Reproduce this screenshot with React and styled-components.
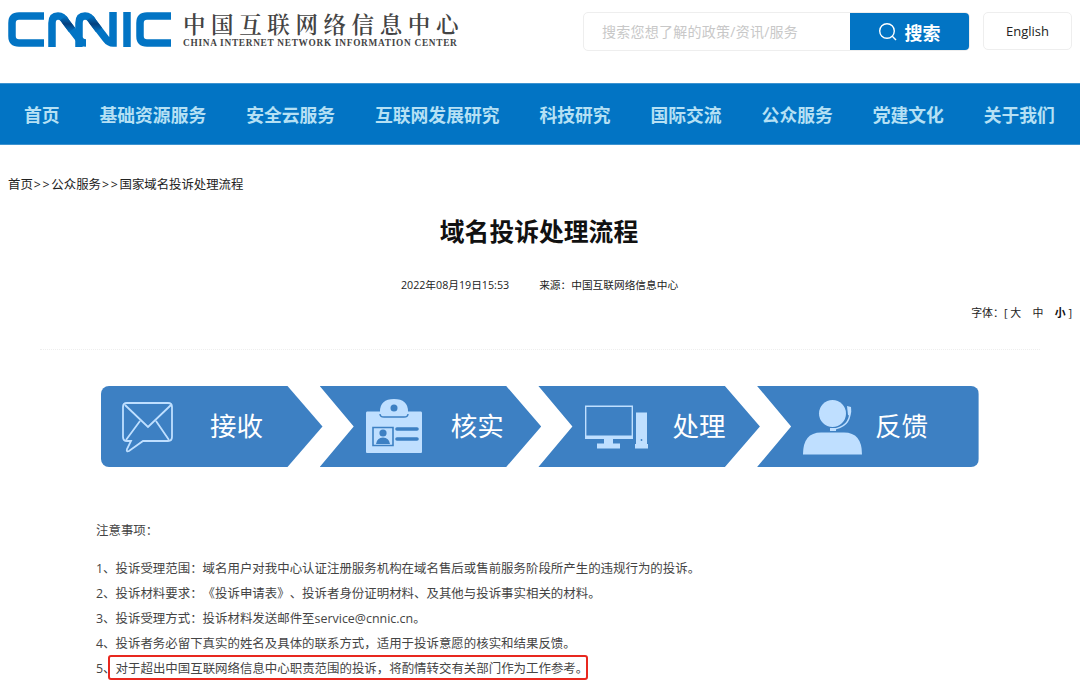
import React from 'react';
import styled, {createGlobalStyle} from 'styled-components';

const GlobalStyle = createGlobalStyle`
  html, body {
    margin: 0;
    padding: 0;
    background: #fff;
  }
  body {
    font-family: "Open Sans", "Noto Sans CJK SC", sans-serif;
    color: #333;
    overflow: hidden;
    text-spacing-trim: space-all;
  }
`;

const Page = styled.div`
  width: 1080px;
  height: 680px;
  overflow: hidden;
`;

const Header = styled.header`
  height: 83px;
  display: flex;
  align-items: flex-start;
  justify-content: space-between;
  padding: 12px 8px 0;
  box-sizing: border-box;
`;

const Brand = styled.div`
  display: flex;
  gap: 12px;
`;

const BrandText = styled.div`
  display: flex;
  flex-direction: column;
  font-family: "Liberation Serif", "Noto Sans CJK SC", serif;
  color: #444;
`;

const BrandCn = styled.div`
  font-family: "Noto Serif CJK SC", "Noto Sans CJK SC", serif;
  font-size: 22.5px;
  font-weight: 600;
  line-height: 23px;
  letter-spacing: 5.6px;
  white-space: nowrap;
`;

const BrandEn = styled.div`
  margin-top: 3px;
  font-size: 9.3px;
  font-weight: bold;
  line-height: 11px;
  letter-spacing: 0.72px;
  white-space: nowrap;
`;

const HeaderRight = styled.div`
  display: flex;
  gap: 13px;
`;

const SearchBox = styled.div`
  width: 387px;
  height: 39px;
  display: flex;
  border: 1px solid #eee;
  border-radius: 5px;
  box-sizing: border-box;
  overflow: hidden;
`;

const SearchInput = styled.div`
  flex: 1;
  padding-left: 18px;
  font-size: 14px;
  line-height: 37px;
  letter-spacing: 0.25px;
  color: #c8c8c8;
  white-space: nowrap;
`;

const SearchButton = styled.div`
  width: 119px;
  display: flex;
  align-items: center;
  justify-content: center;
  gap: 7px;
  padding-right: 1px;
  box-sizing: border-box;
  background: #0274c4;
  color: #fff;
  font-size: 18px;
  font-weight: bold;
`;

const LangButton = styled.div`
  width: 89px;
  height: 38px;
  border: 1px solid #eee;
  border-radius: 5px;
  box-sizing: border-box;
  font-size: 13px;
  line-height: 36px;
  text-align: center;
  color: #222;
`;

const Nav = styled.nav`
  height: 62px;
  display: flex;
  align-items: center;
  justify-content: space-between;
  padding: 0 25px 0 24px;
  box-sizing: border-box;
  background: #0274c4;
  border-top: 1px solid #3d93d0;
  border-bottom: 1px solid #3d93d0;
  color: #b5e0f4;
  font-size: 17.8px;
  font-weight: bold;
`;

const Crumbs = styled.div`
  padding: 32px 8px 0;
  font-size: 12.4px;
  line-height: 16px;
  color: #222;
`;

const CrumbSep = styled.span`
  letter-spacing: 1.7px;
  margin-left: 1px;
`;

const Title = styled.h1`
  margin: 18px 0 0;
  padding-right: 2px;
  font-size: 24.8px;
  line-height: 40px;
  font-weight: bold;
  text-align: center;
  color: #111;
`;

const Meta = styled.div`
  margin-top: 26px;
  display: flex;
  justify-content: center;
  gap: 30px;
  font-size: 10.7px;
  line-height: 16px;
  color: #222;
  padding-right: 1px;
`;

const FontSize = styled.div`
  margin-top: 12px;
  display: flex;
  justify-content: flex-end;
  padding-right: 8px;
  font-size: 10.9px;
  line-height: 16px;
  color: #222;
  white-space: pre;
`;

const Small = styled.b`
  color: #111;
`;

const Divider = styled.div`
  margin: 28px 40px 0 40px;
  border-top: 1px dotted #eee;
`;

const Flow = styled.div`
  margin: 36px 0 0 101px;
  display: flex;
`;

const Step = styled.div`
  width: 221.5px;
  height: 81px;
  margin-left: ${props => props.$first ? '0' : '-2.8px'};
  display: flex;
  align-items: center;
  box-sizing: border-box;
  padding-left: ${props => props.$pad}px;
  background: #3d80c3;
  color: #fff;
  font-size: 26.5px;
  border-radius: ${props => props.$first ? '8px 0 0 8px' : props.$last ? '0 8px 8px 0' : '0'};
  clip-path: ${props => props.$first
    ? 'polygon(0 0, 186.5px 0, 221.5px 50%, 186.5px 100%, 0 100%)'
    : props.$last
      ? 'polygon(0 0, 100% 0, 100% 100%, 0 100%, 34px 50%)'
      : 'polygon(0 0, 186.5px 0, 221.5px 50%, 186.5px 100%, 0 100%, 34px 50%)'};
`;

const StepLabel = styled.span`
  margin-bottom: 4px;
`;

const StepIcon = styled.svg`
  flex-shrink: 0;
  width: ${props => props.$w}px;
  height: 58px;
  margin-right: ${props => props.$gap}px;
  fill: #bfdfff;
`;

const Notes = styled.div`
  margin: 56px 0 0 96px;
  font-size: 12.45px;
  color: #444;
  white-space: nowrap;
`;

const NoteHead = styled.div`
  line-height: 16px;
  margin-bottom: 17px;
`;

const NoteLine = styled.div`
  line-height: 25px;
`;

const Marked = styled.span`
  position: relative;
  &::after {
    content: "";
    position: absolute;
    left: -8px;
    right: 0;
    top: -5px;
    bottom: -3px;
    border: 2px solid #e8281f;
    border-radius: 3px;
  }
`;

const navItems = ['首页', '基础资源服务', '安全云服务', '互联网发展研究', '科技研究', '国际交流', '公众服务', '党建文化', '关于我们'];

const Logo = () => (
  <svg width="163" height="35" viewBox="0 0 163 35" fill="none" stroke="#0274c4" strokeWidth="7.5">
    <defs>
      <linearGradient id="fold" gradientUnits="userSpaceOnUse" x1="0" y1="4" x2="0" y2="20">
        <stop offset="0" stopColor="#0274c4"/>
        <stop offset="0.5" stopColor="#033f7e"/>
        <stop offset="1" stopColor="#0274c4"/>
      </linearGradient>
    </defs>
    <path d="M36 4H11Q4 4 4 11V24Q4 31 11 31H36"/>
    <path d="M44 35V11Q44 4 50 4Q55 4 58 10L71 27Q74 31 78 31"/>
    <path d="M71 35V11Q71 4 77 4Q82 4 85 10L98 27Q101 31 105 31Q105 31 105 24V0"/>
    <path d="M55 6L64 18" stroke="url(#fold)"/>
    <path d="M82 6L91 18" stroke="url(#fold)"/>
    <path d="M119 0V35"/>
    <path d="M163 4H139Q132 4 132 11V24Q132 31 139 31H163"/>
  </svg>
);

const MailIcon = () => (
  <StepIcon $w={52} $gap={36} viewBox="0 0 52 58">
    <path d="M5 5H46Q50 5 50 9V39Q50 43 46 43H21L7 53Q4 54 5 51L9 43H5Q1 43 1 39V9Q1 5 5 5Z" fill="none" stroke="#bfdfff" strokeWidth="1.8"/>
    <path d="M3 7L26 29L49 7M4 42L18 23M47 42L34 23" fill="none" stroke="#bfdfff" strokeWidth="1.8"/>
  </StepIcon>
);

const CardIcon = () => (
  <StepIcon $w={56} $gap={29} viewBox="0 0 56 58">
    <path d="M1 13.5H14Q14 1 28 1Q42 1 42 13.5H55Q56 13.5 56 15V54Q56 55 55 55H1Q0 55 0 54V15Q0 13.5 1 13.5Z"/>
    <path d="M14 16Q14 19 18 19H38Q42 19 42 16" fill="none" stroke="#3d80c3" strokeWidth="1.4"/>
    <circle cx="28" cy="10" r="3.5" fill="#3d80c3"/>
    <path d="M7 29.5H27V47.5H7Z" fill="none" stroke="#3d80c3" strokeWidth="1.6"/>
    <circle cx="17" cy="35" r="3.6" fill="#3d80c3"/>
    <path d="M10 46Q11 39.5 17 39.5Q23 39.5 24 46Z" fill="#3d80c3"/>
    <path d="M31 31H51M31 41H51" stroke="#3d80c3" strokeWidth="3.6" strokeLinecap="round"/>
  </StepIcon>
);

const DesktopIcon = () => (
  <StepIcon $w={63} $gap={24} viewBox="0 0 63 58">
    <path d="M0 7.5H48V41H0ZM1.4 9V37.5H46.6V9Z" fillRule="evenodd"/>
    <path d="M19 41H28V45.5H35V50.5H12V45.5H19Z"/>
    <path d="M51 14.5H62V46H63V50.5H50V46H51Z"/>
    <circle cx="56.5" cy="42" r="0.9" fill="#3d80c3"/>
  </StepIcon>
);

const AgentIcon = () => (
  <StepIcon $w={59} $gap={13} viewBox="0 0 59 58">
    <circle cx="29.5" cy="15.5" r="13.5"/>
    <path d="M0 56.5Q0 34.5 18 34.5H41Q59 34.5 59 56.5Z"/>
    <path d="M47 14Q47 29 29 31.5" fill="none" stroke="#bfdfff" strokeWidth="1.4"/>
    <path d="M44 8L48 9Q49 14 47 18L45 17Z"/>
    <path d="M27 30H33V33H27Z"/>
  </StepIcon>
);

export default function App() {
  return (
    <Page>
      <GlobalStyle/>
      <Header>
        <Brand>
          <Logo/>
          <BrandText>
            <BrandCn>中国互联网络信息中心</BrandCn>
            <BrandEn>CHINA INTERNET NETWORK INFORMATION CENTER</BrandEn>
          </BrandText>
        </Brand>
        <HeaderRight>
          <SearchBox>
            <SearchInput>搜索您想了解的政策/资讯/服务</SearchInput>
            <SearchButton>
              <svg width="20" height="20" viewBox="0 0 20 20" fill="none" stroke="#fff" strokeWidth="1.4">
                <circle cx="9" cy="9" r="7.3"/>
                <path d="M14.3 14.3L18 18"/>
              </svg>
              搜索
            </SearchButton>
          </SearchBox>
          <LangButton>English</LangButton>
        </HeaderRight>
      </Header>
      <Nav>
        {navItems.map(item => <span key={item}>{item}</span>)}
      </Nav>
      <Crumbs>首页<CrumbSep>&gt;&gt;</CrumbSep>公众服务<CrumbSep>&gt;&gt;</CrumbSep>国家域名投诉处理流程</Crumbs>
      <Title>域名投诉处理流程</Title>
      <Meta>
        <span>2022年08月19日15:53</span>
        <span>来源：中国互联网络信息中心</span>
      </Meta>
      <FontSize>
        字体：[ 大    中    <Small>小</Small> ]
      </FontSize>
      <Divider/>
      <Flow>
        <Step $first $pad={21}><MailIcon/><StepLabel>接收</StepLabel></Step>
        <Step $pad={46}><CardIcon/><StepLabel>核实</StepLabel></Step>
        <Step $pad={47}><DesktopIcon/><StepLabel>处理</StepLabel></Step>
        <Step $last $pad={46}><AgentIcon/><StepLabel>反馈</StepLabel></Step>
      </Flow>
      <Notes>
        <NoteHead>注意事项：</NoteHead>
        <NoteLine>1、投诉受理范围：域名用户对我中心认证注册服务机构在域名售后或售前服务阶段所产生的违规行为的投诉。</NoteLine>
        <NoteLine>2、投诉材料要求：《投诉申请表》、投诉者身份证明材料、及其他与投诉事实相关的材料。</NoteLine>
        <NoteLine>3、投诉受理方式：投诉材料发送邮件至service@cnnic.cn。</NoteLine>
        <NoteLine>4、投诉者务必留下真实的姓名及具体的联系方式，适用于投诉意愿的核实和结果反馈。</NoteLine>
        <NoteLine>5、<Marked>对于超出中国互联网络信息中心职责范围的投诉，将酌情转交有关部门作为工作参考。</Marked></NoteLine>
      </Notes>
    </Page>
  );
}
